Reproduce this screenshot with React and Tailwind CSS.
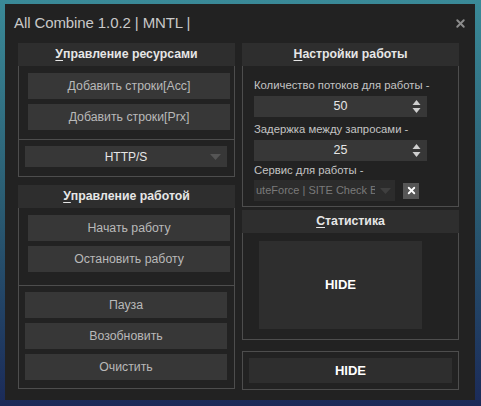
import { X } from "lucide-react";

const font = { fontFamily: '"Liberation Sans", Arial, sans-serif' };

function Btn({ children, className = "" }) {
  return (
    <div className={`flex h-[26px] items-center justify-center bg-[#373737] text-[12.3px] text-[#b9b9b9] ${className}`}>
      {children}
    </div>
  );
}

function Header({ first, rest }) {
  return (
    <div className="flex h-[23px] items-center justify-center bg-[#2e2e2e] text-[12.3px] font-bold text-[#e6e6e6]">
      <span className="underline underline-offset-2">{first}</span>
      {rest}
    </div>
  );
}

function Spin({ value }) {
  return (
    <div className="relative flex h-[21px] w-[173px] items-center justify-center bg-[#373737] text-[12.5px] text-[#e6e6e6]">
      {value}
      <svg className="absolute right-[6px] top-[3px]" width="9" height="15" viewBox="0 0 9 15">
        <path d="M4.5 1 L8.5 6 L0.5 6 Z" fill="#cfcfcf" />
        <path d="M0.5 9 L8.5 9 L4.5 14 Z" fill="#cfcfcf" />
      </svg>
    </div>
  );
}

export default function App() {
  return (
    <div
      className="h-[406px] w-[481px] overflow-hidden bg-gradient-to-b from-[#3a8a98] via-[#2a5c72] to-[#1b2a58] pl-[5px] pt-[4px]"
      style={font}
    >
      <div className="flex h-[396px] w-[470px] flex-col bg-[#222222]">
        <div className="flex h-[39px] items-center justify-between pl-[9px] pr-[8px]">
          <span className="text-[15px] tracking-[-0.1px] text-[#c9c9c9]">All Combine 1.0.2 | MNTL |</span>
          <X size={13} strokeWidth={3.5} className="text-[#8c8c8c]" />
        </div>
        <div className="flex gap-[7px] pl-[13px]">
          {/* left column */}
          <div className="flex w-[217px] flex-col">
            <Header first="У" rest="правление ресурсами" />
            <div className="flex flex-col border-x border-b border-[#4d4d4d]">
              <div className="flex flex-col gap-[5px] pb-[9px] pl-[9px] pr-[4px] pt-[7px]">
                <Btn>Добавить строки[Acc]</Btn>
                <Btn>Добавить строки[Prx]</Btn>
              </div>
              <div className="border-t border-[#4d4d4d] pb-[9px] pl-[6px] pr-[7px] pt-[6px]">
                <div className="relative flex h-[21px] items-center justify-center bg-[#373737] text-[12px] text-[#e6e6e6]">
                  HTTP/S
                  <svg className="absolute right-[6px] top-[8px]" width="11" height="6" viewBox="0 0 11 6">
                    <path d="M0 0 L11 0 L5.5 6 Z" fill="#555555" />
                  </svg>
                </div>
              </div>
            </div>
            <div className="mt-[8px]">
              <Header first="У" rest="правление работой" />
            </div>
            <div className="flex flex-col border-x border-b border-[#4d4d4d]">
              <div className="flex flex-col gap-[5px] pb-[13px] pl-[9px] pr-[4px] pt-[7px]">
                <Btn>Начать работу</Btn>
                <Btn>Остановить работу</Btn>
              </div>
              <div className="flex flex-col gap-[5px] border-t border-[#4d4d4d] pb-[8px] pl-[6px] pr-[7px] pt-[6px]">
                <Btn>Пауза</Btn>
                <Btn className="h-[25px]">Возобновить</Btn>
                <Btn>Очистить</Btn>
              </div>
            </div>
          </div>
          {/* right column */}
          <div className="flex w-[217px] flex-col">
            <Header first="Н" rest="астройки работы" />
            <div className="flex flex-col border-x border-b border-[#4d4d4d] pb-[5px] pl-[11px] pt-[9px] text-[11.3px] text-[#c4c4c4]">
              <div className="h-[20px] leading-[20px]">Количество потоков для работы -</div>
              <div className="mt-[1px]">
                <Spin value="50" />
              </div>
              <div className="mt-[2px] h-[20px] leading-[20px]">Задержка между запросами -</div>
              <div className="mt-[1px]">
                <Spin value="25" />
              </div>
              <div className="h-[19px] leading-[19px]">Сервис для работы -</div>
              <div className="flex items-center gap-[8px]">
                <div className="relative flex h-[21px] w-[141px] items-center overflow-hidden bg-[#2c2c2c] pl-[2px] text-[11px] text-[#7a7a7a]">
                  <span className="whitespace-nowrap">uteForce | SITE Check Ba</span>
                  <div className="absolute right-0 top-0 flex h-[21px] w-[20px] items-center justify-center bg-[#2c2c2c]">
                    <svg width="11" height="6" viewBox="0 0 11 6">
                      <path d="M0 0 L11 0 L5.5 6 Z" fill="#3f3f3f" />
                    </svg>
                  </div>
                </div>
                <div className="flex h-[16px] w-[16px] items-center justify-center bg-[#565656]">
                  <X size={11} strokeWidth={4} className="text-white" />
                </div>
              </div>
            </div>
            <div className="mt-[3px]">
              <Header first="С" rest="татистика" />
            </div>
            <div className="flex flex-col border-x border-b border-[#4d4d4d] pb-[10px] pl-[16px] pt-[8px]">
              <div className="flex h-[88px] w-[163px] items-center justify-center bg-[#2e2e2e] text-[13px] font-bold text-white">
                HIDE
              </div>
            </div>
            <div className="mt-[11px] border border-[#4d4d4d] px-[6px] py-[6px]">
              <div className="flex h-[25px] items-center justify-center bg-[#2e2e2e] text-[13px] font-bold text-white">
                HIDE
              </div>
            </div>
          </div>
        </div>
      </div>
    </div>
  );
}
